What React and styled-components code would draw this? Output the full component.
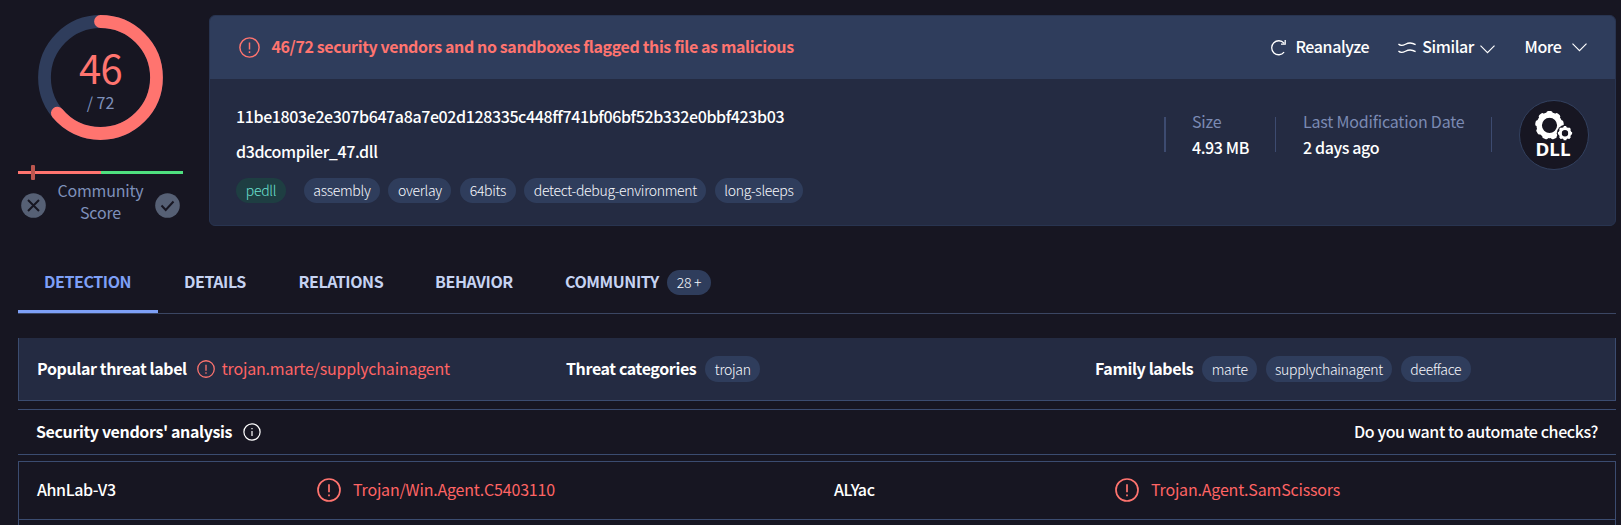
import React from "react";
import styled, { createGlobalStyle } from "styled-components";

const GlobalStyle = createGlobalStyle`
  * { box-sizing: border-box; }
  html, body { margin: 0; background: #171622; }
  body {
    height: 525px;
    overflow: hidden;
    color: #fff;
    font-family: "Noto Sans CJK SC", "Noto Sans", sans-serif;
    font-size: 16px;
    line-height: 24px;
    white-space: nowrap;
  }
  svg { display: block; flex: none; }
`;

const Page = styled.main`
  width: 1621px;
  height: 525px;
  padding: 15px 5px 0 18px;
  overflow: hidden;
`;
const Summary = styled.section`
  display: flex;
  gap: 26px;
  height: 211px;
`;
const ScorePanel = styled.aside`
  width: 165px;
  display: flex;
  flex-direction: column;
  align-items: center;
`;
const Gauge = styled.div`
  display: grid;
  width: 125px;
  height: 125px;
  > * { grid-area: 1 / 1; }
`;
const GaugeText = styled.div`
  display: flex;
  flex-direction: column;
  align-items: center;
`;
const Detections = styled.span`
  margin-top: 36px;
  font-size: 40px;
  line-height: 32px;
  letter-spacing: -0.6px;
  color: #ff746f;
`;
const Total = styled.span`
  margin-top: 9px;
  font-size: 16px;
  line-height: 20px;
  color: #7e90ba;
`;
const Track = styled.div`
  display: flex;
  align-items: center;
  width: 165px;
  height: 15px;
  margin-top: 25px;
  background: linear-gradient(90deg, #ff746f 50%, #4fe07f 50%) center / 100% 3px no-repeat;
`;
const Marker = styled.i`
  width: 4px;
  height: 15px;
  margin-left: 13px;
  border-radius: 1px;
  background: #bc564f;
`;
const Community = styled.div`
  display: flex;
  justify-content: space-between;
  align-items: flex-end;
  width: 159px;
  height: 38px;
`;
const CommunityLabel = styled.span`
  align-self: flex-start;
  margin-top: -1px;
  font-size: 16px;
  line-height: 22px;
  letter-spacing: -0.2px;
  text-align: center;
  color: #7e90ba;
`;
const Card = styled.article`
  flex: 1;
  border: 1px solid #283450;
  border-radius: 6px;
  overflow: hidden;
  background: #242b42;
`;
const CardHead = styled.header`
  display: flex;
  align-items: center;
  height: 63px;
  padding: 0 28.5px 0 29px;
  background: #2f3d5c;
`;
const tracking = { 400: -0.19, 500: -0.39, 700: -0.38 };
const Text = styled.span`
  display: block;
  padding-bottom: ${(p) => p.$lift ?? 2}px;
  font-size: 16px;
  font-weight: ${(p) => p.$weight || 400};
  color: ${(p) => p.$color || "#fff"};
  letter-spacing: ${(p) => tracking[p.$weight || 400]}px;
`;
const Actions = styled.div`
  display: flex;
  align-items: center;
  margin-left: auto;
`;
const Action = styled.button`
  display: flex;
  align-items: center;
  gap: ${(p) => p.$gap}px;
  margin-left: ${(p) => p.$before || 0}px;
  padding: 0;
  border: 0;
  background: none;
  color: #fff;
  font: inherit;
`;
const CardBody = styled.div`
  display: flex;
  justify-content: space-between;
  padding: 21px 26px 0 26px;
`;
const Identity = styled.div`
  display: flex;
  flex-direction: column;
  padding-top: 4px;
`;
const Line = styled.div`
  height: 35px;
`;
const Tags = styled.div`
  display: flex;
  gap: 8.5px;
  margin-top: 4px;
`;
const Tag = styled.span`
  width: ${(p) => p.$w}px;
  height: ${(p) => p.$h || 25}px;
  margin-right: ${(p) => p.$after || 0}px;
  border-radius: 13px;
  font-size: 14px;
  font-weight: 300;
  line-height: ${(p) => p.$h || 25}px;
  letter-spacing: -0.3px;
  text-align: center;
  background: ${(p) => (p.$green ? "#1e3e42" : "#2f3d5c")};
  color: ${(p) => (p.$green ? "#6be0d0" : "#f8faff")};
`;
const Facts = styled.div`
  display: flex;
  height: 70px;
`;
const Fact = styled.dl`
  display: flex;
  flex-direction: column;
  justify-content: center;
  width: ${(p) => p.$w}px;
  height: 52px;
  margin: 8px 0 0;
  padding-left: 28px;
  line-height: 26px;
  background: linear-gradient(#3d4b70, #3d4b70) left 9px / ${(p) => p.$rule || 1}px 35px no-repeat;
`;
const Tabs = styled.nav`
  display: flex;
  height: 66px;
  margin-top: 22px;
  border-bottom: 1px solid #3b4663;
`;
const Tab = styled.a`
  display: flex;
  align-items: center;
  width: ${(p) => p.$w}px;
  padding: 3px 0 0 26px;
  gap: 8px;
  font-size: 16px;
  font-weight: 700;
  letter-spacing: -0.42px;
  color: ${(p) => (p.$active ? "#7ea0f7" : "#c6d3f2")};
  box-shadow: ${(p) => (p.$active ? "inset 0 -3px #7ea0f7" : "none")};
`;
const TabLabel = styled.span`
  padding-bottom: 2px;
`;
const ThreatBar = styled.section`
  display: grid;
  grid-template-columns: 529px 529px 1fr;
  height: 63px;
  margin-top: 24px;
  padding-left: 18px;
  align-items: center;
  border: solid #3b4c70;
  border-width: 0 1px 1px;
  background: #242b42;
`;
const Group = styled.div`
  display: flex;
  align-items: center;
  gap: ${(p) => p.$gap || 8.8}px;
`;
const AnalysisBar = styled.section`
  display: flex;
  align-items: center;
  justify-content: space-between;
  height: 46px;
  margin-top: 8px;
  padding: 0 18px;
  border: solid #3b4c70;
  border-width: 1px 0;
`;
const Results = styled.section`
  margin-top: 6px;
  height: 70px;
  border: 1px solid #3b4c70;
`;
const ResultRow = styled.div`
  display: grid;
  grid-template-columns: 280px 517px 281px 1fr;
  align-items: center;
  height: 58px;
  padding: 0 0 1px 18px;
  border-bottom: 1px solid #3b4c70;
`;

const Alert = ({ size, color = "#ff746f" }) => (
  <svg width={size} height={size} viewBox="0 0 24 24" fill="none" stroke={color} strokeWidth={1.7}>
    <circle cx="12" cy="12" r="11" />
    <path d="M12 6.2v8M12 16.4v1.8" />
  </svg>
);
const Info = () => (
  <svg width="18" height="18" viewBox="0 0 18 18" fill="none" stroke="#fff" strokeWidth="1.2">
    <circle cx="9" cy="9" r="8.1" />
    <path d="M9 8v5M9 5v1.3" />
  </svg>
);
const ChevronBox = styled.svg`
  margin-top: ${(p) => p.$drop}px;
`;
const Chevron = ({ drop = 0 }) => (
  <ChevronBox $drop={drop} width="15" height="9" viewBox="0 0 15 9" fill="none" stroke="#fff" strokeWidth="1.15">
    <path d="M.5 .7 7.5 7.7 14.5 .7" />
  </ChevronBox>
);
const Reload = () => (
  <svg width="17" height="17" viewBox="0 0 17 17" fill="none" stroke="#fff" strokeWidth="1.3">
    <path d="M14.1 13.2A7 7 0 1 1 14 4.2M15.2 1v4.2H11" />
  </svg>
);
const Waves = () => (
  <svg width="18" height="14" viewBox="0 0 18 14" fill="none" stroke="#fff" strokeWidth="1.3">
    <path d="M.4 3C2.4 5 4.7 4.700 7.500 3.200S14 1.500 17.600 3.600M.4 10C2.400 12 4.700 11.700 7.500 10.200S14 8.500 17.600 10.600" />
  </svg>
);
const Vote = ({ d }) => (
  <svg width="25" height="25" viewBox="0 0 25 25" fill="none">
    <circle cx="12.5" cy="12.5" r="12.3" fill="#566075" />
    <path d={d} stroke="#171622" strokeWidth="2" />
  </svg>
);

const Gear = ({ cx, cy, r, hole, teeth, tooth, tip }) => (
  <g>
    <circle cx={cx} cy={cy} r={(r + hole) / 2} fill="none" stroke="#fff" strokeWidth={r - hole} />
    {Array.from({ length: teeth }, (_, i) => (
      <rect
        key={i}
        x={cx - tooth / 2}
        y={cy - tip}
        width={tooth}
        height={tip - hole - 0.5}
        rx={tooth * 0.3}
        fill="#fff"
        transform={`rotate(${(i * 360) / teeth} ${cx} ${cy})`}
      />
    ))}
  </g>
);
const DllBadge = () => (
  <svg width="70" height="70" viewBox="0 0 70 70">
    <circle cx="35" cy="35" r="34.5" fill="#171622" stroke="#33415f" />
    <Gear cx={30.5} cy={25.3} r={13} hole={7.6} teeth={9} tooth={6} tip={14.3} />
    <circle cx="46" cy="33.2" r="8.2" fill="#171622" />
    <Gear cx={46} cy={33.2} r={6.2} hole={3.2} teeth={8} tooth={3} tip={7.1} />
    <text x="34" y="55.8" textAnchor="middle" fill="#fff" fontSize="17" fontWeight="700" textLength="35" lengthAdjust="spacingAndGlyphs" fontFamily="Noto Sans, sans-serif">DLL</text>
  </svg>
);

const CIRC = 2 * Math.PI * 56;

export default function App() {
  return (
    <Page>
      <GlobalStyle />
      <Summary>
        <ScorePanel>
          <Gauge>
            <svg width="125" height="125" viewBox="0 0 125 125" fill="none" strokeWidth="12.8">
              <circle cx="62.5" cy="62.5" r="56" stroke="#2f3d5c" />
              <circle
                cx="62.5" cy="62.5" r="56" stroke="#ff746f" strokeLinecap="round"
                strokeDasharray={`${(CIRC * 46) / 72} ${CIRC}`}
                transform="rotate(-90 62.5 62.5)"
              />
            </svg>
            <GaugeText>
              <Detections>46</Detections>
              <Total>/ 72</Total>
            </GaugeText>
          </Gauge>
          <Track><Marker /></Track>
          <Community>
            <Vote d="m7 7 11 11M18 7 7 18" />
            <CommunityLabel>Community<br />Score</CommunityLabel>
            <Vote d="m6.5 12.5 4.2 4.5L18.5 8.5" />
          </Community>
        </ScorePanel>
        <Card>
          <CardHead>
            <Group $gap={11.5}>
              <Alert size={21} />
              <Text $lift={3} $weight={700} $color="#ff746f">46/72 security vendors and no sandboxes flagged this file as malicious</Text>
            </Group>
            <Actions>
              <Action $gap={8}><Reload /><Text $lift={3} $weight={500}>Reanalyze</Text></Action>
              <Action $gap={6} $before={29}><Waves /><Text $lift={3} $weight={500}>Similar</Text><Chevron drop={3} /></Action>
              <Action $gap={10} $before={29.5}><Text $lift={3} $weight={500}>More</Text><Chevron /></Action>
            </Actions>
          </CardHead>
          <CardBody>
            <Identity>
              <Line><Text $weight={500}>11be1803e2e307b647a8a7e02d128335c448ff741bf06bf52b332e0bbf423b03</Text></Line>
              <Line><Text $weight={500}>d3dcompiler_47.dll</Text></Line>
              <Tags>
                <Tag $green $w={50} $after={9.4}>pedll</Tag>
                <Tag $w={76}>assembly</Tag>
                <Tag $w={63}>overlay</Tag>
                <Tag $w={56}>64bits</Tag>
                <Tag $w={182}>detect-debug-environment</Tag>
                <Tag $w={88}>long-sleeps</Tag>
              </Tags>
            </Identity>
            <Facts>
              <Fact $w={111} $rule={2}><Text $lift={0} $color="#7b8ab3">Size</Text><Text $lift={0} $weight={500}>4.93 MB</Text></Fact>
              <Fact $w={216}><Text $lift={0} $color="#7b8ab3">Last Modification Date</Text><Text $lift={0} $weight={500}>2 days ago</Text></Fact>
              <Fact $w={28} />
              <DllBadge />
            </Facts>
          </CardBody>
        </Card>
      </Summary>
      <Tabs>
        <Tab $active $w={140}><TabLabel>DETECTION</TabLabel></Tab>
        <Tab $w={114.5}><TabLabel>DETAILS</TabLabel></Tab>
        <Tab $w={136.5}><TabLabel>RELATIONS</TabLabel></Tab>
        <Tab $w={130}><TabLabel>BEHAVIOR</TabLabel></Tab>
        <Tab><TabLabel>COMMUNITY</TabLabel><Tag $w={44}>28 +</Tag></Tab>
      </Tabs>
      <ThreatBar>
        <Group $gap={10}>
          <Text $weight={700}>Popular threat label</Text>
          <Group $gap={7}><Alert size={18} /><Text $color="#ff6464">trojan.marte/supplychainagent</Text></Group>
        </Group>
        <Group><Text $weight={700}>Threat categories</Text><Tag $h={26} $w={55}>trojan</Tag></Group>
        <Group>
          <Text $weight={700}>Family labels</Text>
          <Tag $h={26} $w={55}>marte</Tag>
          <Tag $h={26} $w={126}>supplychainagent</Tag>
          <Tag $h={26} $w={70}>deefface</Tag>
        </Group>
      </ThreatBar>
      <AnalysisBar>
        <Group $gap={10.5}><Text $weight={700}>Security vendors' analysis</Text><Info /></Group>
        <Text $weight={500}>Do you want to automate checks?</Text>
      </AnalysisBar>
      <Results>
        <ResultRow>
          <Text $weight={500}>AhnLab-V3</Text>
          <Group $gap={12}><Alert size={24} /><Text $color="#ff6464">Trojan/Win.Agent.C5403110</Text></Group>
          <Text $weight={500}>ALYac</Text>
          <Group $gap={12}><Alert size={24} /><Text $color="#ff6464">Trojan.Agent.SamScissors</Text></Group>
        </ResultRow>
      </Results>
    </Page>
  );
}
